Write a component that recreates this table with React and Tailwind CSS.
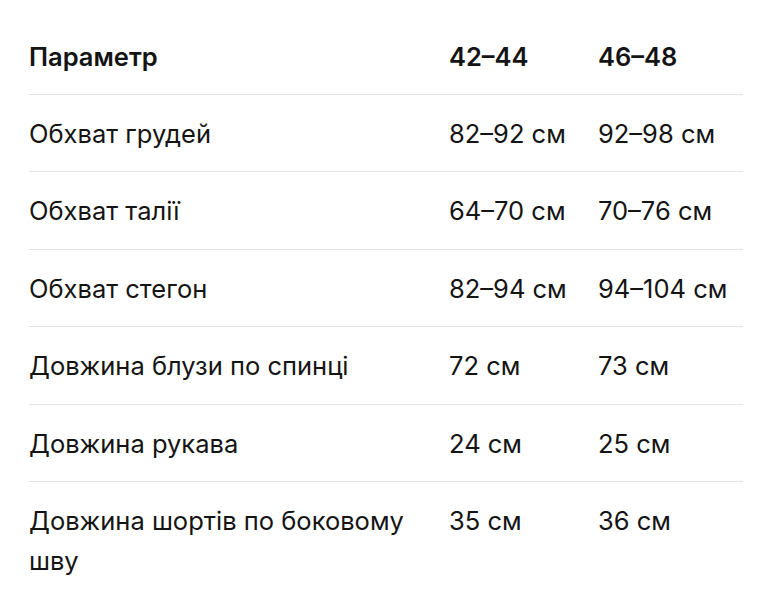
export default function App() {
  const rows = [
    ["Обхват грудей", "82–92 см", "92–98 см"],
    ["Обхват талії", "64–70 см", "70–76 см"],
    ["Обхват стегон", "82–94 см", "94–104 см"],
    ["Довжина блузи по спинці", "72 см", "73 см"],
    ["Довжина рукава", "24 см", "25 см"],
    ["Довжина шортів по боковому шву", "35 см", "36 см"],
  ];
  return (
    <div className="w-[773px] h-[600px] bg-white pl-[29px] pr-[30px] pt-[18px] text-[#141414]" style={{ fontFamily: "Inter, 'Noto Sans', sans-serif" }}>
      <div className="grid grid-cols-[420px_149px_1fr] pt-[19px] pb-[17px] border-b border-[#e4e4e4] text-[25.5px] leading-[40px] font-semibold">
        <div>Параметр</div>
        <div>42–44</div>
        <div>46–48</div>
      </div>
      {rows.map((r, i) => (
        <div key={i} className={"grid grid-cols-[420px_149px_1fr] pt-[19px] pb-[17.4px] text-[25.5px] leading-[40px] " + (i < rows.length - 1 ? "border-b border-[#e4e4e4]" : "")}>
          <div className="pr-[30px]">{r[0]}</div>
          <div>{r[1]}</div>
          <div>{r[2]}</div>
        </div>
      ))}
    </div>
  );
}
